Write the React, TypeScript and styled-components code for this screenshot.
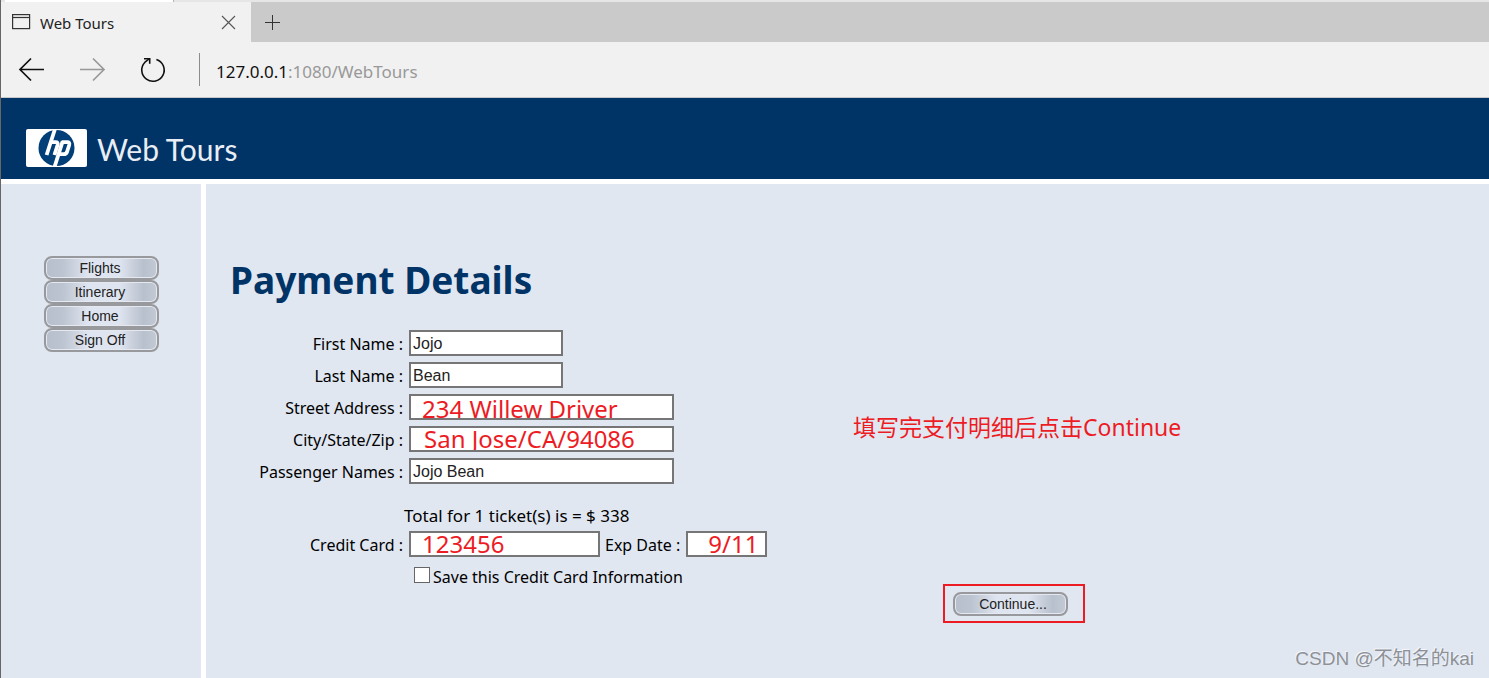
import React from "react";
import styled, { createGlobalStyle } from "styled-components";

const uiFont = `"Noto Sans", "Open Sans", "Noto Sans CJK SC", sans-serif`;
const controlFont = `"Liberation Sans", Arial, sans-serif`;

const navy = "#003366";
const panel = "#e0e7f1";
const red = "#ed1c24";

const GlobalStyle = createGlobalStyle`
  *, *::before, *::after { box-sizing: border-box; }
  body { margin: 0; background: ${panel}; }
  button, input { margin: 0; }
`;

const Window = styled.div`
  position: relative;
  display: flex;
  flex-direction: column;
  min-height: 100vh;
  border-left: 1px solid #666;
  background: #fff;
  font-family: ${uiFont};
`;

const WindowEdge = styled.div`
  display: flex;
  height: 2px;
  background: #e6e6e6;

  &::before {
    content: "";
    width: 173px;
    background: #fff;
    border-left: 4px solid #e6e6e6;
    border-right: 1px solid #b5b5b5;
  }
`;

const TabBar = styled.div`
  display: flex;
  height: 40px;
  background: #cacaca;
`;

const Tab = styled.div`
  display: flex;
  align-items: center;
  width: 250px;
  padding: 0 15px 0 11px;
  background: #f1f1f1;
  font: 15px/20px ${uiFont};
  color: #222;
`;

const TabTitle = styled.span`
  flex: 1;
  padding: 2px 0 0 9px;
`;

const IconButton = styled.button`
  display: flex;
  align-items: center;
  justify-content: center;
  padding: 0;
  border: 0;
  background: transparent;
`;

const NewTab = styled(IconButton)`
  width: 43px;
`;

const Toolbar = styled.div`
  display: flex;
  align-items: center;
  height: 56px;
  padding-left: 16px;
  background: #f1f1f1;
  border-bottom: 1px solid #c8c8c8;
`;

const ToolbarButtons = styled.div`
  display: flex;
  gap: 33px;
  padding-right: 32px;
`;

const Address = styled.div`
  flex: 1;
  height: 33px;
  padding: 2px 0 0 16px;
  border-left: 1px solid #8c8c8c;
  font: 17px/33px ${uiFont};
  color: #999;
`;

const Host = styled.span`
  color: #111;
`;

const Banner = styled.header`
  display: flex;
  align-items: flex-end;
  gap: 10px;
  height: 81px;
  padding: 0 25px 12px;
  background: ${navy};
`;

const Brand = styled.span`
  padding-bottom: 1px;
  font: 400 30px/34px Lato, sans-serif;
  color: #e9eef5;
`;

const Frames = styled.div`
  flex: 1;
  display: flex;
  gap: 5px;
  padding-top: 5px;
`;

const Sidebar = styled.nav`
  display: flex;
  flex-direction: column;
  align-items: center;
  flex: 0 0 200px;
  padding-top: 72px;
  background: ${panel};
`;

const PillButton = styled.button`
  width: 115px;
  height: 24px;
  padding: 0 2px 1px 0;
  border: 2px solid #98999c;
  border-radius: 8px;
  background: linear-gradient(90deg, #b7bfcc, #bcc4d1 15%, #dfe5f0 38%, #dfe5f0 66%, #b8c0cd 88%, #c3cad6);
  box-shadow: inset 0 0 0 1px #e4e9f1;
  font: 14px/18px ${controlFont};
  color: #222;
`;

const SubmitButton = styled(PillButton)`
  padding: 0 0 1px 5px;
`;

const Main = styled.main`
  flex: 1;
  padding: 72px 24px 24px;
  background: ${panel};
`;

const Title = styled.h1`
  margin: 0 0 26px;
  font-size: 37px;
  line-height: 48px;
  font-weight: bold;
  color: ${navy};
`;

const Payment = styled.form`
  display: flex;
`;

const Details = styled.div`
  display: grid;
  gap: 6px;
  align-content: start;
  width: 623px;
  font-size: 16px;
`;

const Row = styled.div`
  display: grid;
  grid-template-columns: 174px max-content max-content max-content;
  column-gap: 5px;
  align-items: center;
`;

const Label = styled.label`
  padding: 2px 1px 0 0;
  line-height: 24px;
  text-align: right;
`;

type FieldProps = { $width: number; $marked?: boolean; $indent?: number; $low?: boolean };

const Field = styled.input<FieldProps>`
  width: ${(p) => p.$width}px;
  height: 26px;
  padding: ${(p) => (p.$low ? "3px 0 0" : p.$marked ? "0 0 2px" : "2px 0 0")};
  padding-left: ${(p) => p.$indent ?? 2}px;
  border: 2px solid #767676;
  border-radius: 0;
  background: #fff;
  font: ${(p) => (p.$marked ? `24px/22px ${uiFont}` : `16px/20px ${controlFont}`)};
  color: ${(p) => (p.$marked ? red : "#222")};
`;

const Total = styled.p`
  margin: 14px 0 -3px;
  padding-left: 174px;
  font-size: 17px;
  line-height: 24px;
`;

const SaveRow = styled.label`
  display: flex;
  gap: 3px;
  margin-top: 4px;
  padding-left: 184px;
  line-height: 20px;
`;

const Checkbox = styled.input`
  appearance: none;
  width: 16px;
  height: 16px;
  border: 1px solid #666;
  background: #fff;
`;

const Side = styled.div`
  flex: 1;
  display: flex;
  flex-direction: column;
  align-items: flex-start;
  padding-top: 80px;
`;

const Note = styled.p`
  margin: 0;
  font: 23px/34px ${uiFont};
  color: ${red};
`;

const Highlight = styled.div`
  display: flex;
  margin: 140px 0 0 90px;
  padding: 6px 15px 5px 8px;
  border: 2px solid ${red};
`;

const Watermark = styled.div`
  position: absolute;
  right: 15px;
  bottom: 6px;
  font: 19px/26px "Liberation Sans", "Noto Sans CJK SC", sans-serif;
  color: #8d9197;
  text-shadow: -1px -1px 0 #f4f6fa;
`;

const WindowIcon = () => (
  <svg width="19" height="16" viewBox="0 0 19 16" fill="none" stroke="#333">
    <rect x="0.6" y="0.6" width="17" height="14" strokeWidth="1.2" />
    <path d="M0 3.5H18" strokeWidth="1.2" />
  </svg>
);

const CloseIcon = () => (
  <svg width="15" height="15" viewBox="0 0 15 15" fill="none" stroke="#555" strokeWidth="1.1">
    <path d="M1 1L14 14M14 1L1 14" />
  </svg>
);

const PlusIcon = () => (
  <svg width="15" height="15" viewBox="0 0 15 15" stroke="#333">
    <path d="M7.5 0V15M0 7.5H15" />
  </svg>
);

const ArrowIcon = ({ color, flipped }: { color: string; flipped?: boolean }) => (
  <svg width="28" height="28" viewBox="0 0 28 28" fill="none" stroke={color} strokeWidth="1.7">
    <path d={flipped ? "M2 13.5H26M15 2.5L26 13.5L15 24.5" : "M27 13.5H3M14 2.5L3 13.5L14 24.5"} />
  </svg>
);

const ReloadIcon = () => (
  <svg width="28" height="28" viewBox="0 0 28 28" fill="none" stroke="#111" strokeWidth="1.6">
    <path d="M17.4 3.4A11.2 11.2 0 1 1 6 6.2L10 3" />
    <path d="M5 2.8H10.7V7.8" />
  </svg>
);

const HpLogo = () => (
  <svg width="61" height="38" viewBox="0 0 61 38" role="img" aria-label="hp">
    <rect width="61" height="38" rx="2" fill="#fff" />
    <circle cx="30.5" cy="19" r="18" fill="#003f77" />
    <g stroke="#fff" strokeWidth="3.8" fill="none">
      <path d="M29 0L20.6 26M28.5 38L36.7 12.2" />
      <path d="M25 13.2H29.6Q32.4 13.2 31.6 16L28.4 26" />
      <path d="M36 13.2H41.2Q44 13.2 43.2 16L41 23Q40.2 25.2 37.8 25.2H33.6" />
    </g>
  </svg>
);

const navItems = ["Flights", "Itinerary", "Home", "Sign Off"];

type Entry = { id: string; label: string; value: string } & FieldProps;

const entries: Entry[] = [
  { id: "first", label: "First Name :", value: "Jojo", $width: 154 },
  { id: "last", label: "Last Name :", value: "Bean", $width: 154 },
  { id: "street", label: "Street Address :", value: "234 Willew Driver", $width: 265, $marked: true, $indent: 11, $low: true },
  { id: "city", label: "City/State/Zip :", value: "San Jose/CA/94086", $width: 265, $marked: true, $indent: 13 },
  { id: "names", label: "Passenger Names :", value: "Jojo Bean", $width: 265 },
];

export default function App() {
  return (
    <Window>
      <GlobalStyle />
      <WindowEdge />
      <TabBar>
        <Tab>
          <WindowIcon />
          <TabTitle>Web Tours</TabTitle>
          <IconButton type="button" aria-label="Close tab">
            <CloseIcon />
          </IconButton>
        </Tab>
        <NewTab type="button" aria-label="New tab">
          <PlusIcon />
        </NewTab>
      </TabBar>
      <Toolbar>
        <ToolbarButtons>
          <IconButton type="button" aria-label="Back">
            <ArrowIcon color="#111" />
          </IconButton>
          <IconButton type="button" aria-label="Forward">
            <ArrowIcon color="#999" flipped />
          </IconButton>
          <IconButton type="button" aria-label="Reload">
            <ReloadIcon />
          </IconButton>
        </ToolbarButtons>
        <Address>
          <Host>127.0.0.1</Host>:1080/WebTours
        </Address>
      </Toolbar>
      <Banner>
        <HpLogo />
        <Brand>Web Tours</Brand>
      </Banner>
      <Frames>
        <Sidebar>
          {navItems.map((item) => (
            <PillButton key={item} type="button">
              {item}
            </PillButton>
          ))}
        </Sidebar>
        <Main>
          <Title>Payment Details</Title>
          <Payment onSubmit={(e) => e.preventDefault()}>
            <Details>
              {entries.map(({ id, label, value, ...look }) => (
                <Row key={id}>
                  <Label htmlFor={id}>{label}</Label>
                  <Field id={id} defaultValue={value} {...look} />
                </Row>
              ))}
              <Total>Total for 1 ticket(s) is = $ 338</Total>
              <Row>
                <Label htmlFor="card">Credit Card :</Label>
                <Field id="card" defaultValue="123456" $width={191} $marked $indent={11} />
                <Label htmlFor="expiry">Exp Date :</Label>
                <Field id="expiry" defaultValue="9/11" $width={81} $marked $indent={20} />
              </Row>
              <SaveRow>
                <Checkbox type="checkbox" />
                Save this Credit Card Information
              </SaveRow>
            </Details>
            <Side>
              <Note>填写完支付明细后点击Continue</Note>
              <Highlight>
                <SubmitButton type="submit">Continue...</SubmitButton>
              </Highlight>
            </Side>
          </Payment>
        </Main>
      </Frames>
      <Watermark>CSDN @不知名的kai</Watermark>
    </Window>
  );
}
